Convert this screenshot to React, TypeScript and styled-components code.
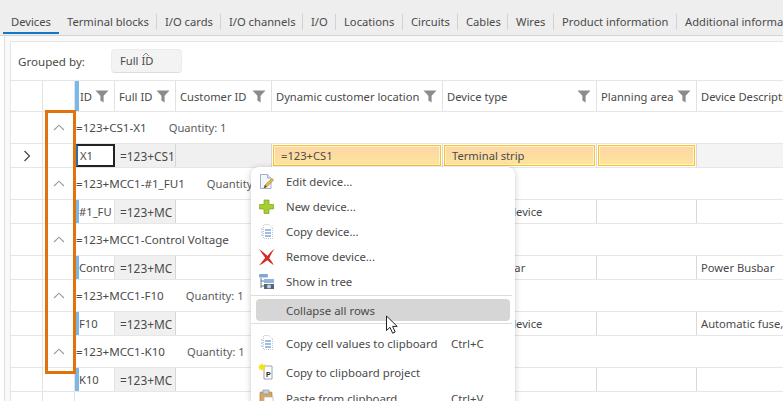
import React from "react";
import styled, { createGlobalStyle } from "styled-components";

const Global = createGlobalStyle`
  html, body { margin: 0; padding: 0; background: #fff; }
  body { font-family: "Noto Sans", "Open Sans", sans-serif; font-size: 11.2px; color: #4a4a4a; width: 783px; height: 401px; overflow: hidden; }
  * { box-sizing: border-box; }
`;

const COLS = "32px 32px 40px 61px 96px 171px 154px 100px 88px";

const Page = styled.div`
  position: relative;
  width: 783px;
  height: 401px;
  overflow: hidden;
  display: flex;
  flex-direction: column;
  background: #fff;
`;
const TabBar = styled.div`
  height: 36px;
  flex: none;
  display: flex;
  align-items: flex-end;
  padding-left: 3px;
  background: #eeeeee;
  border-bottom: 1px solid #d4d4d4;
  white-space: nowrap;
  overflow: hidden;
`;
const Tab = styled.div<{ $w: number; $active?: boolean; $sep?: boolean }>`
  flex: none;
  width: ${(p) => p.$w}px;
  height: ${(p) => (p.$active ? 20 : 16)}px;
  margin-bottom: ${(p) => (p.$active ? 1 : 5)}px;
  padding-left: 8px;
  line-height: 15px;
  border-bottom: ${(p) => (p.$active ? "2px solid #0f78c8" : "none")};
  border-right: ${(p) => (p.$sep ? "1px solid #d2d2d2" : "none")};
`;
const Shell = styled.div`
  flex: 1;
  min-height: 0;
  display: flex;
  flex-direction: column;
  margin-left: 4px;
  padding: 5px 0 0 5px;
  background: #f9f9f9;
  border-left: 1px solid #dedede;
`;
const Frame = styled.div`
  flex: 1;
  min-height: 0;
  display: flex;
  flex-direction: column;
  background: #fff;
  border-top: 1px solid #e6e6e6;
  border-left: 1px solid #e6e6e6;
`;
const GroupBar = styled.div`
  height: 39px;
  flex: none;
  display: flex;
  align-items: center;
  padding-left: 7px;
  gap: 27px;
  border-bottom: 1px solid #e6e6e6;
`;
const GroupLabel = styled.span`
  width: 66px;
  white-space: nowrap;
  font-size: 11.6px;
`;
const GroupChip = styled.div`
  position: relative;
  width: 71px;
  height: 24px;
  padding-left: 8px;
  line-height: 22px;
  background: #f3f3f3;
  border: 1px solid #ececec;
  border-bottom-color: #dcdcdc;
  border-radius: 4px;
  svg { position: absolute; left: 30px; top: 2px; }
`;
const Row = styled.div<{ $h: number }>`
  display: grid;
  grid-template-columns: ${COLS};
  height: ${(p) => p.$h}px;
  flex: none;
  border-bottom: 1px solid #e6e6e6;
`;
const Filler = styled.div`
  flex: 1;
  display: grid;
  grid-template-columns: ${COLS};
`;
const Gutter = styled.div`
  border-right: 1px solid #e2e2e2;
  display: flex;
  align-items: center;
  justify-content: center;
`;
const HeadCell = styled.div<{ $bar?: boolean }>`
  display: flex;
  align-items: center;
  justify-content: space-between;
  padding: 0 5px 0 ${(p) => (p.$bar ? 1 : 4)}px;
  white-space: nowrap;
  overflow: hidden;
  border-right: 1px solid #e2e2e2;
  border-left: ${(p) => (p.$bar ? "4px solid #7ab8e8" : "none")};
`;
const GroupTitle = styled.div`
  grid-column: 3 / -1;
  display: flex;
  align-items: center;
  gap: 22px;
  padding-left: 1px;
  white-space: nowrap;
  font-size: 11.6px;
`;
const Qty = styled.span`
  color: #5c5c5c;
  font-size: 11.2px;
`;
const IdCell = styled.div<{ $selected?: boolean }>`
  display: flex;
  align-items: center;
  overflow: hidden;
  white-space: nowrap;
  border-right: 1px solid #e2e2e2;
  border-left: 4px solid #7ab8e8;
  ${(p) =>
    p.$selected
      ? "border: 2px solid #222; border-left-color: #2b6ea8; padding-left: 2px; margin-left: 1px;"
      : ""}
`;
const ReadCell = styled.div`
  display: flex;
  align-items: center;
  padding: 0 2px 0 5px;
  overflow: hidden;
  white-space: nowrap;
  font-size: 11.9px;
  background: #f0f0f0;
  border-right: 1px solid #d6d6d6;
`;
const ClipText = styled.span`
  display: block;
  overflow: hidden;
`;
const Cell = styled.div<{ $tint?: boolean; $pad?: number }>`
  display: flex;
  align-items: center;
  padding-left: ${(p) => p.$pad ?? 4}px;
  overflow: hidden;
  white-space: nowrap;
  border-right: 1px solid #d9d9d9;
  background: ${(p) => (p.$tint ? "#f4f4f4" : "transparent")};
`;
const HotSlot = styled.div`
  display: flex;
  padding: 1px;
  border-right: 1px solid #d9d9d9;
`;
const HotCell = styled.div`
  flex: 1;
  display: flex;
  align-items: center;
  padding-left: 7px;
  white-space: nowrap;
  border: 1px solid #fcc42c;
  box-shadow: inset 0 0 0 1px #fff3cf;
  background: linear-gradient(#fdd5a4, #fce59e);
`;
const Highlight = styled.div`
  position: absolute;
  left: 45px;
  top: 110px;
  width: 31px;
  height: 264px;
  border: 3px solid #e0730c;
  pointer-events: none;
`;
const Menu = styled.div`
  position: absolute;
  left: 251px;
  top: 167px;
  width: 264px;
  height: 250px;
  padding-top: 2px;
  background: #fff;
  border-radius: 8px;
  box-shadow: 0 1px 6px rgba(0, 0, 0, 0.22);
  font-size: 11.4px;
`;
const Item = styled.div<{ $h?: number; $hot?: boolean }>`
  display: grid;
  grid-template-columns: 30px 165px 1fr;
  align-items: center;
  height: ${(p) => p.$h ?? 25}px;
  margin: 0 5px;
  border-radius: 4px;
  background: ${(p) => (p.$hot ? "#d6d6d6" : "transparent")};
  white-space: nowrap;
  svg { justify-self: start; margin-left: 2px; }
`;
const Sep = styled.div<{ $top: number; $bottom: number }>`
  height: 1px;
  margin: ${(p) => p.$top}px 3px ${(p) => p.$bottom}px 0;
  background: #dcdcdc;
`;
const Pointer = styled.svg`
  position: absolute;
  left: 385px;
  top: 315px;
`;

const Funnel = () => (
  <svg width="14" height="13" viewBox="0 0 14 13" style={{ flex: "none" }}>
    <path d="M0.5 0.5H13.5L8.6 5.8V12.6L5.4 10.4V5.8Z" fill="#8b8b8b" />
  </svg>
);
const Chevron = () => (
  <svg width="12" height="7" viewBox="0 0 12 7">
    <path d="M1 6L6 1.2L11 6" fill="none" stroke="#9a9a9a" strokeWidth="1.1" />
  </svg>
);
const RowArrow = () => (
  <svg width="8" height="12" viewBox="0 0 8 12">
    <path d="M1.5 1L6.5 6L1.5 11" fill="none" stroke="#444" strokeWidth="1.2" />
  </svg>
);
const EditIcon = () => (
  <svg width="18" height="18" viewBox="0 0 18 18">
    <path d="M2.5 1.5H9.5L13 5V15.5H2.5Z" fill="#f2f6fb" stroke="#9fb2c8" />
    <path d="M9.5 1.5V5H13" fill="#dfe8f2" stroke="#9fb2c8" />
    <path d="M6 15L7 12L14 5.5L15.6 7L9 13.7Z" fill="#e9b64b" stroke="#9a7a34" strokeWidth=".6" />
    <path d="M6 15L7 12L8.8 13.8Z" fill="#444" />
  </svg>
);
const PlusIcon = () => (
  <svg width="18" height="18" viewBox="0 0 18 18">
    <path d="M6 2H11V6.5H15.5V11H11V15.5H6V11H1.5V6.5H6Z" fill="#a4cf2e" stroke="#7ea423" strokeWidth=".7" />
  </svg>
);
const CopyIcon = () => (
  <svg width="18" height="18" viewBox="0 0 18 18">
    <path d="M6.5 1.5H11L14.5 5" fill="none" stroke="#b4bcc7" strokeDasharray="1 1" />
    <path d="M5.5 2V15.5H14.5V5" fill="none" stroke="#c2c9d2" strokeDasharray="1 1" />
    <path d="M7 7H13M7 10H13M7 13H13" stroke="#3f7fc4" strokeWidth="1" />
    <path d="M3 6H5M3 9H5M3 12H5" stroke="#a9b7c8" strokeWidth="1" />
  </svg>
);
const RemoveIcon = () => (
  <svg width="18" height="18" viewBox="0 0 18 18">
    <path d="M1 1C5 3.5 8 6.5 9.5 8C11.5 5.5 13.5 3 16.5 .8C14.5 4 12.6 7 11.3 10.2C13 12.5 14.5 14.5 15.8 17.2C13 15 11 13.4 9.2 12.2C7 14 4.5 15.8 1 17.4C3.2 14.8 5.6 12 7.2 9.8C5.2 7 3 4 1 1Z" fill="#d22b27" />
  </svg>
);
const TreeIcon = () => (
  <svg width="18" height="18" viewBox="0 0 18 18">
    <rect x="1" y="1" width="9" height="3.5" rx="1" fill="#7fa8d9" />
    <path d="M3 5V15M3 8H6M3 13H6" stroke="#6a7686" />
    <rect x="6" y="6" width="10" height="4" fill="#8fb3dd" />
    <rect x="6" y="11" width="10" height="5" fill="#55657a" />
    <circle cx="11" cy="13.5" r="2" fill="#c4cfdd" />
  </svg>
);
const ProjectIcon = () => (
  <svg width="18" height="18" viewBox="0 0 18 18">
    <path d="M6 3H14V16H6Z" fill="#fff" stroke="#9aa3ad" />
    <path d="M4 0L5 2L7 1L6.4 3L8 4L6.4 5L7 7L5 6.2L4 8L3 6.2L1 7L1.6 5L0 4L1.6 3L1 1L3 2Z" fill="#f6e11e" />
    <text x="8" y="14" fontSize="7" fontWeight="700" fontFamily="Liberation Sans" fill="#222">P</text>
  </svg>
);
const PasteIcon = () => (
  <svg width="18" height="18" viewBox="0 0 18 18">
    <rect x="2" y="3" width="12" height="14" rx="1" fill="#d8a860" stroke="#a67c3c" strokeWidth=".7" />
    <rect x="5" y="1" width="6" height="4" fill="#c9ced6" stroke="#8f97a3" strokeWidth=".7" />
    <rect x="6" y="8" width="9" height="10" fill="#fff" stroke="#a8b1bc" strokeWidth=".7" />
  </svg>
);

const HeadLabel = ({ children }: { children: string }) => (
  <HeadCell>
    <span>{children}</span>
    <Funnel />
  </HeadCell>
);

type Group = { title: string; id: string; type?: string; desc?: string };
const groups: Group[] = [
  { title: "=123+MCC1-#1_FU1", id: "#1_FU", type: "Protection device" },
  { title: "=123+MCC1-Control Voltage", id: "Contro", type: "Power Busbar", desc: "Power Busbar" },
  { title: "=123+MCC1-F10", id: "F10", type: "Protection device", desc: "Automatic fuse, single pole" },
  { title: "=123+MCC1-K10", id: "K10" },
];

const GroupRow = ({ title }: { title: string }) => (
  <Row $h={32}>
    <Gutter />
    <Gutter>
      <Chevron />
    </Gutter>
    <GroupTitle>
      <span>{title}</span>
      <Qty>Quantity: 1</Qty>
    </GroupTitle>
  </Row>
);

export default function App() {
  return (
    <Page>
      <Global />
      <TabBar>
        <Tab $w={56} $active>Devices</Tab>
        <Tab $w={98} $sep>Terminal blocks</Tab>
        <Tab $w={64} $sep>I/O cards</Tab>
        <Tab $w={82} $sep>I/O channels</Tab>
        <Tab $w={33} $sep>I/O</Tab>
        <Tab $w={67} $sep>Locations</Tab>
        <Tab $w={55} $sep>Circuits</Tab>
        <Tab $w={50} $sep>Cables</Tab>
        <Tab $w={46} $sep>Wires</Tab>
        <Tab $w={123} $sep>Product information</Tab>
        <Tab $w={140}>Additional information</Tab>
      </TabBar>
      <Shell>
        <Frame>
          <GroupBar>
            <GroupLabel>Grouped by:</GroupLabel>
            <GroupChip>
              Full ID
              <svg width="8" height="5" viewBox="0 0 8 5">
                <path d="M1 4L4 1L7 4" fill="none" stroke="#8a8a8a" />
              </svg>
            </GroupChip>
          </GroupBar>
          <Row $h={31}>
            <Gutter />
            <Gutter />
            <HeadCell $bar>
              <span>ID</span>
              <Funnel />
            </HeadCell>
            <HeadLabel>Full ID</HeadLabel>
            <HeadLabel>Customer ID</HeadLabel>
            <HeadLabel>Dynamic customer location</HeadLabel>
            <HeadLabel>Device type</HeadLabel>
            <HeadLabel>Planning area</HeadLabel>
            <HeadCell>
              <span>Device Description</span>
            </HeadCell>
          </Row>

          <GroupRow title="=123+CS1-X1" />
          <Row $h={24}>
            <Gutter>
              <RowArrow />
            </Gutter>
            <Gutter />
            <IdCell $selected>X1</IdCell>
            <ReadCell>
              <ClipText>=123+CS1</ClipText>
            </ReadCell>
            <ReadCell />
            <HotSlot><HotCell>=123+CS1</HotCell></HotSlot>
            <HotSlot><HotCell>Terminal strip</HotCell></HotSlot>
            <HotSlot><HotCell /></HotSlot>
            <Cell $tint />
          </Row>

          {groups.map((g) => (
            <React.Fragment key={g.title}>
              <GroupRow title={g.title} />
              <Row $h={24}>
                <Gutter />
                <Gutter />
                <IdCell>
                  <ClipText>{g.id}</ClipText>
                </IdCell>
                <ReadCell>
                  <ClipText>=123+MC</ClipText>
                </ReadCell>
                <Cell />
                <Cell />
                <Cell $pad={9}>{g.type}</Cell>
                <Cell />
                <Cell>{g.desc}</Cell>
              </Row>
            </React.Fragment>
          ))}
          <Filler>
            <Gutter />
            <Gutter />
          </Filler>
        </Frame>
      </Shell>

      <Highlight />

      <Menu>
        <Item><EditIcon /><span>Edit device...</span></Item>
        <Item><PlusIcon /><span>New device...</span></Item>
        <Item><CopyIcon /><span>Copy device...</span></Item>
        <Item><RemoveIcon /><span>Remove device...</span></Item>
        <Item><TreeIcon /><span>Show in tree</span></Item>
        <Sep $top={1} $bottom={3} />
        <Item $h={22} $hot><i /><span>Collapse all rows</span></Item>
        <Sep $top={2} $bottom={0} />
        <Item $h={38}><CopyIcon /><span>Copy cell values to clipboard</span><span>Ctrl+C</span></Item>
        <Item $h={20}><ProjectIcon /><span>Copy to clipboard project</span></Item>
        <Item $h={32}><PasteIcon /><span>Paste from clipboard</span><span>Ctrl+V</span></Item>
      </Menu>

      <Pointer width="16" height="20" viewBox="0 0 16 20">
        <path d="M1.5 1V15.5L5 12.3L7.6 18.2L10.2 17L7.6 11.4H12.2Z" fill="#fff" stroke="#222" strokeWidth="1" strokeLinejoin="round" />
      </Pointer>
    </Page>
  );
}
